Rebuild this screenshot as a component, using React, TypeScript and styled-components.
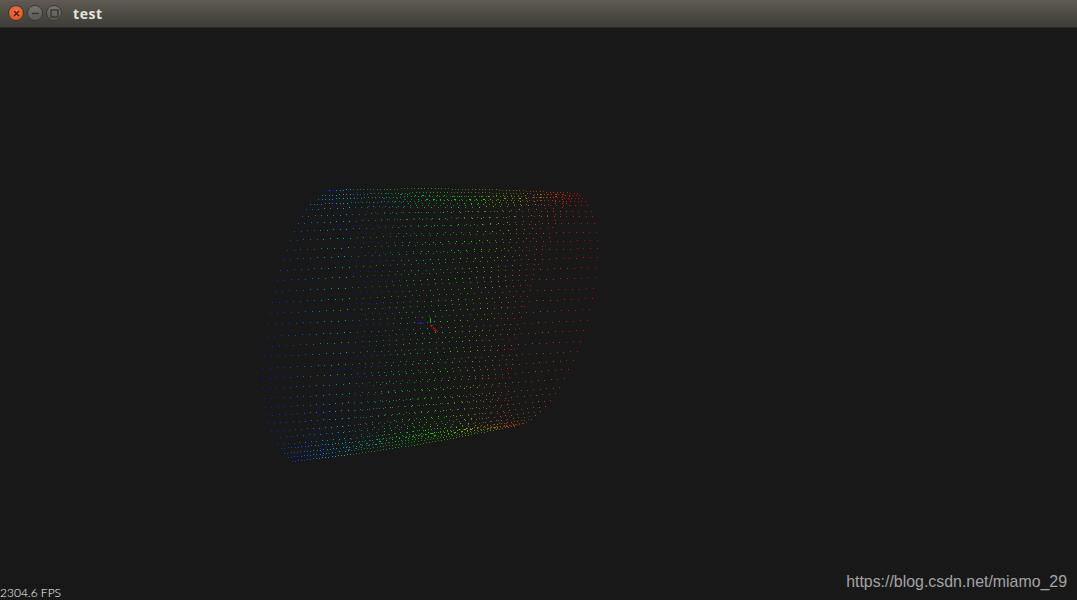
import React, { useMemo } from "react";
import styled, { createGlobalStyle } from "styled-components";

const GlobalStyle = createGlobalStyle`
  html, body {
    margin: 0;
    padding: 0;
    height: 100%;
    background: #181818;
    overflow: hidden;
  }
  #root {
    height: 100%;
  }
`;

// row ends measured off the point cloud, top row to bottom row
const LEFT_EDGE: [number, number][] = [
  [326, 190], [322, 195], [318, 199], [310, 204], [306, 209], [302, 216], [298, 223],
  [294, 231], [290, 240], [287, 250], [283, 259], [280, 270], [277, 280], [275, 291],
  [272, 302], [270, 313], [268, 324], [267, 336], [265, 346], [264, 356], [263, 368],
  [263, 378], [263, 388], [264, 398], [265, 407], [266, 415], [268, 423], [271, 431],
  [274, 437], [277, 444], [281, 448], [284, 453], [288, 457], [292, 461],
];
const RIGHT_EDGE: [number, number][] = [
  [577, 193], [579, 195], [582, 198], [585, 201], [587, 205], [591, 211], [592, 216],
  [594, 223], [596, 232], [597, 240], [597, 248], [597, 257], [595, 267], [595, 277],
  [593, 288], [592, 298], [589, 309], [587, 320], [583, 330], [580, 341], [577, 351],
  [573, 360], [568, 369], [564, 378], [559, 387], [555, 393], [550, 400], [545, 406],
  [540, 411], [535, 415], [531, 419], [526, 422], [522, 423], [517, 425],
];

const COLUMNS = 46;

interface Dot {
  x: number;
  y: number;
  size: number;
  color: string;
}

// small repeatable noise so the dots come out the same on every render
function noise(a: number, b: number) {
  const s = Math.sin(a * 12.9898 + b * 78.233) * 43758.5453;
  return s - Math.floor(s);
}

// t 0 = blue, 0.5 = green, 1 = red; the mixes in between stay dim like the reference
function rampColor(t: number, level: number) {
  const c = Math.min(1, Math.max(0, t));
  const r = Math.max(0, c * 2 - 1);
  const g = 1 - Math.abs(c * 2 - 1);
  const b = Math.max(0, 1 - c * 2);
  const peak = Math.max(r, g, b);
  const scale = 1 / (0.45 + 0.55 * peak);
  const mix = (v: number) => Math.round(24 + (v * scale * 255 - 24) * level);
  return `rgb(${mix(r)},${mix(g)},${mix(b)})`;
}

function buildCloud() {
  const dots: Dot[] = [];
  const rows = LEFT_EDGE.length;

  for (let i = 0; i < rows; i++) {
    const [lx, ly] = LEFT_EDGE[i];
    const [rx, ry] = RIGHT_EDGE[i];
    const v = i / (rows - 1);
    const edge = Math.abs(v * 2 - 1);
    const crowd = edge > 0.8 ? 1.6 : 1;

    // outer sheet, spans the whole row
    const count = Math.round(COLUMNS * crowd);
    for (let j = 0; j <= count; j++) {
      const u = j / count;
      const x = lx + (rx - lx) * u;
      const y = ly + (ry - ly) * u + Math.sin(u * Math.PI) * (v - 0.5) * 6;
      const t = (x - 250) / 335;
      // the blue end reads much darker on this background, so lift it
      const lift = t < 0.3 ? 0.4 : t > 0.85 ? 0.2 : 0;
      const level = 0.42 + noise(i, j) * 0.25 + lift;
      dots.push({
        x: Math.round(x),
        y: Math.round(y),
        size: 1,
        color: rampColor(t, Math.min(1, level)),
      });
    }

    // inner sheet, narrower and brighter, colours squeezed into its width
    const inset = Math.sin(v * Math.PI) * 72;
    const ix0 = lx + inset;
    const ix1 = rx - inset * 0.95;
    const inner = edge > 0.8 ? 34 : 27;
    for (let j = 0; j <= inner; j++) {
      const u = Math.min(1, (j + (i % 2) * 0.5) / inner);
      const x = ix0 + (ix1 - ix0) * u;
      const base = ly + (ry - ly) * ((x - lx) / (rx - lx));
      const y = base + 5 * Math.sin(v * Math.PI) + Math.sin(u * Math.PI) * (v - 0.5) * -8;
      const t = Math.pow(u, 1.3);
      const bright = noise(j + 3, i + 7) > 0.45;
      dots.push({
        x: Math.round(x),
        y: Math.round(y),
        size: edge > 0.88 && noise(i + 1, j) > 0.6 ? 2 : 1,
        color: rampColor(t, bright ? 0.9 : 0.6),
      });
    }
  }
  return dots;
}

function App() {
  const dots = useMemo(buildCloud, []);

  return (
    <Page>
      <GlobalStyle />
      <TitleBar>
        <WindowButtons>
          <WindowButton variant="close">
            <svg width="9" height="9" viewBox="0 0 9 9">
              <path d="M2 2 L7 7 M7 2 L2 7" stroke="#4a1a08" strokeWidth="1.3" />
            </svg>
          </WindowButton>
          <WindowButton>
            <svg width="9" height="9" viewBox="0 0 9 9">
              <path d="M1 4.5 H8" stroke="#35342f" strokeWidth="1.4" />
            </svg>
          </WindowButton>
          <WindowButton>
            <svg width="9" height="9" viewBox="0 0 9 9">
              <rect x="1" y="1" width="7" height="7" fill="none" stroke="#35342f" strokeWidth="1.3" />
            </svg>
          </WindowButton>
        </WindowButtons>
        <Title>test</Title>
      </TitleBar>
      <Viewport>
        <Cloud viewBox="0 28 1077 572" shapeRendering="crispEdges">
          {dots.map((d, i) => (
            <rect key={i} x={d.x} y={d.y} width={d.size} height={1} fill={d.color} />
          ))}
          <path d="M430 318 V323" stroke="#17b017" strokeWidth="1" />
          <path d="M417 323.5 H424" stroke="#1414d8" strokeWidth="1" />
          <path d="M431 325 L437 332" stroke="#b01414" strokeWidth="2" strokeDasharray="2 1" />
        </Cloud>
        <Fps>2304.6 FPS</Fps>
        <Watermark>https://blog.csdn.net/miamo_29</Watermark>
      </Viewport>
    </Page>
  );
}

export default App;

const Page = styled.div`
  display: flex;
  flex-direction: column;
  width: 1077px;
  height: 600px;
  overflow: hidden;
  background: #181818;
`;

const TitleBar = styled.div`
  display: flex;
  align-items: center;
  flex: 0 0 28px;
  padding: 0 0 1px 8px;
  box-sizing: border-box;
  background: linear-gradient(#5f5b53, #3d3c37);
  border-bottom: 1px solid #2a2926;
`;

const WindowButtons = styled.div`
  display: flex;
  gap: 3px;
  margin-right: 11px;
`;

const WindowButton = styled.div<{ variant?: "close" }>`
  display: flex;
  align-items: center;
  justify-content: center;
  box-sizing: border-box;
  width: 16px;
  height: 16px;
  border-radius: 50%;
  border: 1px solid #3a3935;
  background: ${(props) =>
    props.variant === "close"
      ? "radial-gradient(circle at 50% 40%, #f2774a, #dd4814)"
      : "linear-gradient(#777570, #5b5a55)"};
`;

const Title = styled.div`
  font: bold 14px "Open Sans", "DejaVu Sans", sans-serif;
  letter-spacing: 0.6px;
  color: #e6e3dc;
`;

const Viewport = styled.div`
  position: relative;
  flex: 1;
  overflow: hidden;
`;

const Cloud = styled.svg`
  display: block;
  width: 100%;
  height: 100%;
`;

const Fps = styled.div`
  position: absolute;
  left: 0;
  bottom: 0;
  font: 300 12px/14px Lato, "Open Sans", sans-serif;
  color: #ffffff;
`;

const Watermark = styled.div`
  position: absolute;
  right: 10px;
  bottom: 9px;
  font: 15.9px "Liberation Sans", Arial, sans-serif;
  color: #a4a4a4;
`;
